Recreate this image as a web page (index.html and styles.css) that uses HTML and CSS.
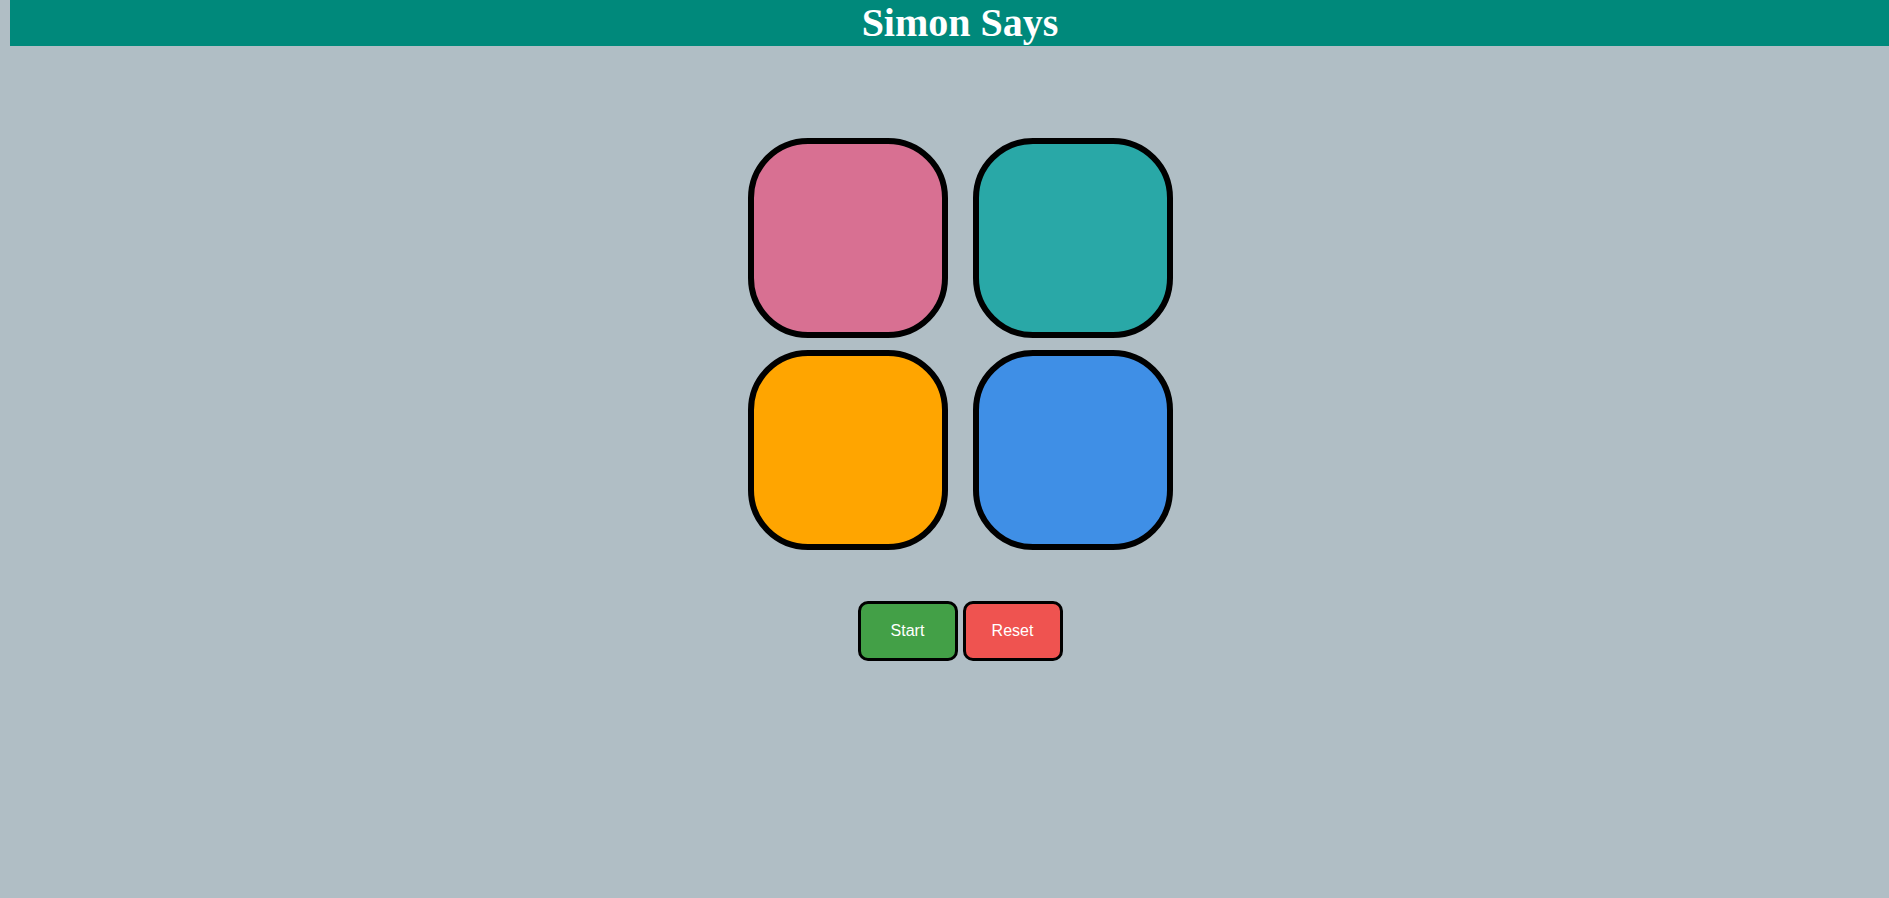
FILE: index.html
```html
<!DOCTYPE html>
<html lang="en">
<head>
<meta charset="utf-8">
<title>Simon Says</title>
<link rel="stylesheet" href="styles.css">
</head>
<body>
  <header class="top">
    <h1 class="title">Simon Says</h1>
  </header>
  <main class="game">
    <div class="board">
      <div class="pad pad-pink"></div>
      <div class="pad pad-teal"></div>
      <div class="pad pad-orange"></div>
      <div class="pad pad-blue"></div>
    </div>
    <div class="controls">
      <button class="ctrl ctrl-start">Start</button>
      <button class="ctrl ctrl-reset">Reset</button>
    </div>
  </main>
</body>
</html>
```

FILE: styles.css
```css
html {
  overflow: hidden;
  background: #b0bec5;
}
body {
  margin: 0 10px;
  width: 1900px;
  background: #b0bec5;
}
.top {
  background: #00897b;
  height: 46px;
}
.title {
  margin: 0;
  font-family: "Liberation Serif", "Times New Roman", serif;
  font-size: 40px;
  font-weight: bold;
  line-height: 46px;
  color: #fff;
  text-align: center;
}
.game {
  display: flex;
  flex-direction: column;
  align-items: center;
  padding-top: 92px;
}
.board {
  display: grid;
  grid-template-columns: 200px 200px;
  grid-auto-rows: 200px;
  column-gap: 25px;
  row-gap: 12px;
}
.pad {
  box-sizing: border-box;
  border: 6px solid #000;
  border-radius: 30%;
}
.pad-pink { background: #d87092; }
.pad-teal { background: #29a8a7; }
.pad-orange { background: #ffa500; }
.pad-blue { background: #3f8fe6; }
.controls {
  display: flex;
  gap: 5px;
  margin-top: 51px;
}
.ctrl {
  box-sizing: border-box;
  width: 100px;
  height: 60px;
  border: 3px solid #000;
  border-radius: 10px;
  font-family: "Liberation Sans", Arial, sans-serif;
  font-size: 16px;
  color: #fff;
  padding: 0;
}
.ctrl-start { background: #43a047; }
.ctrl-reset { background: #ef5350; }
```
